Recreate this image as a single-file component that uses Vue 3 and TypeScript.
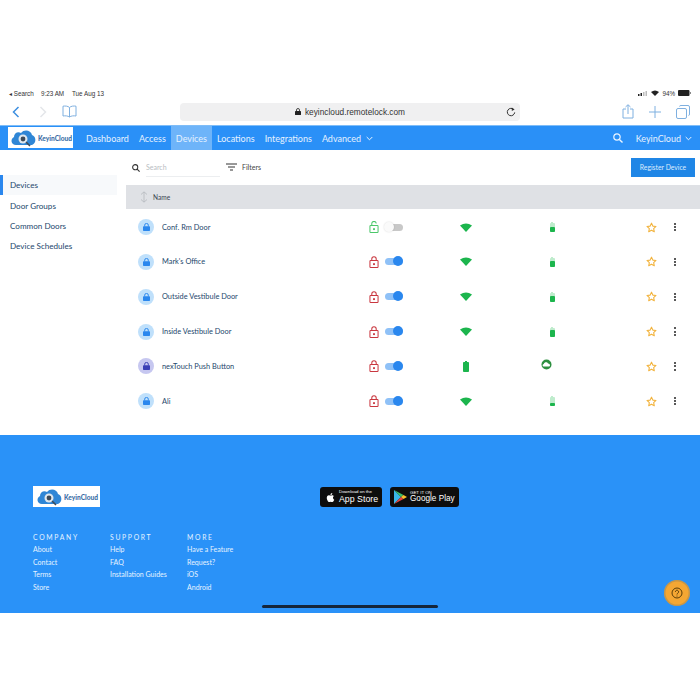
<script setup lang="ts">
interface Device {
  name: string
  locked: boolean
  on: boolean
  hub?: boolean
  level: number
}

const navLinks = ['Dashboard', 'Access', 'Devices', 'Locations', 'Integrations']
const sideLinks = ['Devices', 'Door Groups', 'Common Doors', 'Device Schedules']

const devices: Device[] = [
  { name: 'Conf. Rm Door', locked: false, on: false, level: 60 },
  { name: "Mark's Office", locked: true, on: true, level: 70 },
  { name: 'Outside Vestibule Door', locked: true, on: true, level: 60 },
  { name: 'Inside Vestibule Door', locked: true, on: true, level: 70 },
  { name: 'nexTouch Push Button', locked: true, on: true, hub: true, level: 100 },
  { name: 'Ali', locked: true, on: true, level: 35 }
]

const footerCols = [
  { title: 'COMPANY', links: ['About', 'Contact', 'Terms', 'Store'] },
  { title: 'SUPPORT', links: ['Help', 'FAQ', 'Installation Guides'] },
  { title: 'MORE', links: ['Have a Feature', 'Request?', 'iOS', 'Android'] }
]
</script>

<template>
  <div class="page">
    <div class="status-bar">
      <span class="status-left">&#9666; Search</span>
      <span class="status-time">9:23 AM</span>
      <span class="status-date">Tue Aug 13</span>
      <span class="status-right">
        <svg width="10" height="5" viewBox="0 0 10 5"><rect x="0" y="3" width="1.5" height="2" fill="#222" /><rect x="2.5" y="2" width="1.5" height="3" fill="#222" /><rect x="5" y="1" width="1.5" height="4" fill="#bbb" /><rect x="7.5" y="0" width="1.5" height="5" fill="#bbb" /></svg>
        <svg width="8" height="6" viewBox="0 0 8 6"><path d="M0 2 Q4 -1 8 2 L4 6 Z" fill="#222" /></svg>
        <span>94%</span>
        <svg width="13" height="6" viewBox="0 0 13 6"><rect x="0" y="0" width="11.5" height="6" rx="1" fill="#222" /><rect x="12" y="2" width="1" height="2" fill="#888" /></svg>
      </span>
    </div>

    <div class="safari-bar">
      <div class="safari-left">
        <svg width="8" height="12" viewBox="0 0 8 12"><path d="M6.5 1 L1.5 6 L6.5 11" fill="none" stroke="#3d8fe0" stroke-width="1.5" /></svg>
        <svg width="8" height="12" viewBox="0 0 8 12"><path d="M1.5 1 L6.5 6 L1.5 11" fill="none" stroke="#e4e6ea" stroke-width="1.5" /></svg>
        <svg class="book" width="15" height="13" viewBox="0 0 15 13"><path d="M7.5 2.5 C6 1 3 .8 1 1.2 V11 C3 10.6 6 10.8 7.5 12 C9 10.8 12 10.6 14 11 V1.2 C12 .8 9 1 7.5 2.5 Z M7.5 2.5 V12" fill="none" stroke="#7fb0e0" stroke-width="1" /></svg>
      </div>
      <div class="url-pill">
        <svg class="url-lock" width="6" height="7" viewBox="0 0 6 7"><path d="M1.5 3 V2 a1.5 1.5 0 0 1 3 0 V3" fill="none" stroke="#222" stroke-width=".8" /><rect y="3" width="6" height="4" rx=".6" fill="#222" /></svg>
        <span>keyincloud.remotelock.com</span>
        <svg class="url-reload" width="10" height="10" viewBox="0 0 10 10"><path d="M7.8 2.6 A3.7 3.7 0 1 0 8.7 5.4" fill="none" stroke="#333" stroke-width="1" /><path d="M5.8 .4 L8.6 2.4 L5.8 4 Z" fill="#333" /></svg>
      </div>
      <div class="safari-right">
        <svg width="12" height="15" viewBox="0 0 12 15"><path d="M4 5 H1 V14 H11 V5 H8 M6 10 V1 M3.5 3 L6 .7 L8.5 3" fill="none" stroke="#7fb0e0" stroke-width="1" /></svg>
        <svg width="12" height="12" viewBox="0 0 12 12"><path d="M6 0 V12 M0 6 H12" stroke="#7fb0e0" stroke-width="1" /></svg>
        <svg width="14" height="14" viewBox="0 0 14 14"><rect x=".5" y="3.5" width="10" height="10" rx="1.5" fill="none" stroke="#7fb0e0" /><path d="M3.5 1.5 Q3.5 .5 5 .5 H12 Q13.5 .5 13.5 2 V9 Q13.5 10.5 12.5 10.5" fill="none" stroke="#7fb0e0" /></svg>
      </div>
    </div>

    <nav class="nav">
      <div class="logo logo-nav">
        <svg width="27" height="18" viewBox="0 0 27 18">
          <path d="M6 16 C1 16 0 10 4 8 C4 4 8 2 11 4 C14 0 21 1 22 6 C26 7 27 14 22 16 Z" fill="#2f86d6" />
          <circle cx="13" cy="10" r="4.5" fill="#dfe7ee" />
          <circle cx="13" cy="10" r="2.4" fill="#3d4a58" />
          <path d="M16 13 L20 17" stroke="#3d4a58" stroke-width="1.6" />
        </svg>
        <span>KeyinCloud</span>
      </div>
      <a v-for="link in navLinks" :key="link" class="nav-link" :class="{ active: link === 'Devices' }">{{ link }}</a>
      <a class="nav-link">
        Advanced
        <svg class="chev" width="7" height="5" viewBox="0 0 7 5"><path d="M.7 1 L3.5 3.8 L6.3 1" fill="none" stroke="#eaf4ff" stroke-width="1" /></svg>
      </a>
      <div class="nav-right">
        <svg width="10" height="10" viewBox="0 0 10 10"><circle cx="4" cy="4" r="3.2" fill="none" stroke="#eaf4ff" stroke-width="1.2" /><path d="M6.4 6.4 L9.5 9.5" stroke="#eaf4ff" stroke-width="1.4" /></svg>
        <span class="account">KeyinCloud</span>
        <svg width="7" height="5" viewBox="0 0 7 5"><path d="M.7 1 L3.5 3.8 L6.3 1" fill="none" stroke="#eaf4ff" stroke-width="1" /></svg>
      </div>
    </nav>

    <div class="content">
      <aside class="sidebar">
        <a v-for="link in sideLinks" :key="link" class="side-link" :class="{ active: link === 'Devices' }">{{ link }}</a>
      </aside>
      <main class="main">
        <div class="toolbar">
          <svg class="tool-search" width="8" height="8" viewBox="0 0 10 10"><circle cx="4" cy="4" r="3.2" fill="none" stroke="#333" stroke-width="1.3" /><path d="M6.4 6.4 L9.5 9.5" stroke="#333" stroke-width="1.5" /></svg>
          <div class="search-box">Search</div>
          <div class="filters">
            <svg width="11" height="8" viewBox="0 0 11 8"><path d="M0 1 H11 M2 4 H9 M4 7 H7" stroke="#333" stroke-width="1" /></svg>
            <span>Filters</span>
          </div>
          <button class="register">Register Device</button>
        </div>

        <div class="table-head">
          <svg width="8" height="12" viewBox="0 0 8 12"><path d="M1 3.5 L4 .8 L7 3.5 M1 8.5 L4 11.2 L7 8.5 M4 1 V11" fill="none" stroke="#b4b8bd" stroke-width=".8" /></svg>
          <span>Name</span>
        </div>

        <div v-for="d in devices" :key="d.name" class="row">
          <span class="avatar" :class="{ hub: d.hub }">
            <svg width="7" height="8" viewBox="0 0 7 8"><path d="M1.7 3.5 V2.2 a1.8 1.8 0 0 1 3.6 0 V3.5" fill="none" stroke="currentColor" /><rect y="3.3" width="7" height="4.7" rx=".7" fill="currentColor" /></svg>
          </span>
          <span class="name">{{ d.name }}</span>
          <span class="lock-cell">
            <svg width="10" height="12" viewBox="0 0 10 13" :class="d.locked ? 'red' : 'green'">
              <path v-if="d.locked" d="M2.6 5 V3.2 a2.4 2.4 0 0 1 4.8 0 V5" fill="none" stroke="currentColor" stroke-width="1.1" />
              <path v-else d="M2.6 5 V2.8 a2.4 2.4 0 0 1 4.8 0" fill="none" stroke="currentColor" stroke-width="1.1" />
              <rect x=".6" y="5" width="8.8" height="7.4" rx=".8" fill="none" stroke="currentColor" stroke-width="1.1" />
              <rect x="4" y="7.8" width="2" height="2" fill="currentColor" />
            </svg>
            <span class="toggle" :class="{ on: d.on }"><i></i></span>
          </span>
          <span class="cell">
            <svg v-if="!d.hub" width="12" height="9" viewBox="0 0 12 9"><path d="M0 2.6 Q6 -1.6 12 2.6 L6 9 Z" fill="#1cb54d" /></svg>
            <span v-else class="battery wide"><i style="height: 100%"></i></span>
          </span>
          <span class="cell">
            <svg v-if="d.hub" class="hub-cloud" width="11" height="11" viewBox="0 0 11 11"><circle cx="5.5" cy="5.5" r="5" fill="#2c8f3f" /><path d="M2.8 7.6 C1.2 7.6 1.2 5.2 2.8 5 C3.1 2.9 6.4 2.6 7 4.5 C9.2 4.3 9.8 7.6 7.8 7.6 Z" fill="#fff" /></svg>
            <span v-else class="battery"><i :style="{ height: d.level + '%' }"></i></span>
          </span>
          <span></span>
          <span class="cell">
            <svg width="11" height="11" viewBox="0 0 24 24"><path d="M12 2.5 L14.9 8.9 L21.8 9.7 L16.7 14.4 L18.1 21.3 L12 17.8 L5.9 21.3 L7.3 14.4 L2.2 9.7 L9.1 8.9 Z" fill="none" stroke="#f2b33d" stroke-width="2.4" stroke-linejoin="round" /></svg>
          </span>
          <span class="cell dots"><i></i><i></i><i></i></span>
        </div>
      </main>
    </div>

    <footer class="footer">
      <div class="footer-top">
        <div class="logo logo-footer">
          <svg width="27" height="18" viewBox="0 0 27 18">
            <path d="M6 16 C1 16 0 10 4 8 C4 4 8 2 11 4 C14 0 21 1 22 6 C26 7 27 14 22 16 Z" fill="#2f86d6" />
            <circle cx="13" cy="10" r="4.5" fill="#dfe7ee" />
            <circle cx="13" cy="10" r="2.4" fill="#3d4a58" />
            <path d="M16 13 L20 17" stroke="#3d4a58" stroke-width="1.6" />
          </svg>
          <span>KeyinCloud</span>
        </div>
        <div class="badges">
          <div class="badge badge-apple">
            <svg width="11" height="13" viewBox="0 0 24 24"><path fill="#fff" d="M18.71 19.5c-.83 1.24-1.71 2.45-3.05 2.47-1.34.03-1.77-.79-3.29-.79-1.53 0-2 .77-3.27.82-1.31.05-2.3-1.32-3.14-2.53C4.25 17 2.94 12.45 4.7 9.39c.87-1.52 2.43-2.48 4.12-2.51 1.28-.02 2.5.87 3.29.87.78 0 2.26-1.07 3.81-.91.65.03 2.47.26 3.64 1.98-.09.06-2.17 1.28-2.15 3.81.03 3.02 2.65 4.03 2.68 4.04-.03.07-.42 1.44-1.38 2.83M13 3.5c.73-.83 1.94-1.46 2.94-1.5.13 1.17-.34 2.35-1.04 3.19-.69.85-1.83 1.51-2.95 1.42-.15-1.15.41-2.35 1.05-3.11z" /></svg>
            <div class="badge-text"><small>Download on the</small><b>App Store</b></div>
          </div>
          <div class="badge badge-google">
            <svg width="13" height="14" viewBox="0 0 13 14">
              <path d="M0 0 L7 7 L0 14 Z" fill="#38b6e8" />
              <path d="M0 0 L9.5 5 L7 7 Z" fill="#3dbd6b" />
              <path d="M0 14 L9.5 9 L7 7 Z" fill="#e8413f" />
              <path d="M9.5 5 L13 7 L9.5 9 L7 7 Z" fill="#fbc02d" />
            </svg>
            <div class="badge-text"><small>GET IT ON</small><b>Google Play</b></div>
          </div>
        </div>
      </div>
      <div class="footer-cols">
        <div v-for="col in footerCols" :key="col.title" class="footer-col">
          <h4>{{ col.title }}</h4>
          <a v-for="link in col.links" :key="link">{{ link }}</a>
        </div>
      </div>
      <div class="home-indicator"></div>
      <div class="help">
        <svg width="12" height="12" viewBox="0 0 12 12"><circle cx="6" cy="6" r="5" fill="none" stroke="#5b3d08" stroke-width="1" /><path d="M4.4 4.8 a1.6 1.6 0 1 1 2.4 1.4 C6.2 6.6 6 6.9 6 7.5" fill="none" stroke="#5b3d08" stroke-width="1" /><circle cx="6" cy="9" r=".6" fill="#5b3d08" /></svg>
      </div>
    </footer>
  </div>
</template>

<style>
html,
body {
  margin: 0;
  background: #fff;
}
</style>

<style scoped>
.page {
  height: 700px;
  overflow: hidden;
  padding-top: 88px;
  box-sizing: border-box;
  font-family: Lato, "Open Sans", sans-serif;
  color: #24476c;
}
.status-bar {
  height: 10px;
  display: flex;
  align-items: center;
  padding: 0 9px;
  font-family: "Liberation Sans", sans-serif;
  font-size: 6.3px;
  color: #333;
}
.status-left {
  width: 32px;
}
.status-time {
  width: 31px;
}
.status-right {
  margin-left: auto;
  display: flex;
  align-items: center;
  gap: 3px;
}
.safari-bar {
  height: 27px;
  display: flex;
  align-items: center;
  padding: 0 10px;
}
.safari-left {
  width: 170px;
  display: flex;
  align-items: center;
  gap: 19px;
  padding-left: 2px;
  box-sizing: border-box;
}
.book {
  margin-left: -4px;
}
.url-pill {
  position: relative;
  width: 340px;
  height: 18px;
  border-radius: 4px;
  background: #f0f0f1;
  display: flex;
  align-items: center;
  justify-content: center;
  gap: 4px;
  font-family: "Liberation Sans", sans-serif;
  font-size: 8.3px;
  color: #333;
}
.url-reload {
  position: absolute;
  right: 4px;
  top: 4px;
}
.safari-right {
  margin-left: auto;
  display: flex;
  align-items: center;
  gap: 15px;
}
.nav {
  height: 25px;
  background: #2a90f7;
  border-top: 1px solid #7fbdf8;
  box-sizing: border-box;
  display: flex;
  align-items: stretch;
  padding-left: 8px;
  font-size: 9px;
  color: #e6f2ff;
}
.logo {
  background: #fff;
  display: flex;
  align-items: center;
  gap: 1px;
  box-sizing: border-box;
  font-weight: 900;
  font-size: 6.6px;
  color: #3b6ea6;
  white-space: nowrap;
}
.logo-nav {
  width: 65px;
  height: 21px;
  margin: 1px 8px 0 0;
  padding-left: 2px;
}
.nav-link {
  display: flex;
  align-items: center;
  gap: 5px;
  padding: 0 5px;
  white-space: nowrap;
}
.nav-link.active {
  background: #6eb4f9;
}
.nav-right {
  margin-left: auto;
  display: flex;
  align-items: center;
  padding-right: 8px;
}
.account {
  margin: 0 4px 0 13px;
}
.content {
  height: 285px;
  display: flex;
}
.sidebar {
  width: 117px;
  padding-top: 25px;
  margin-right: 9px;
  display: flex;
  flex-direction: column;
  flex-shrink: 0;
}
.side-link {
  height: 20.4px;
  display: flex;
  align-items: center;
  padding-left: 10px;
  font-size: 8.1px;
}
.side-link.active {
  background: #f7f9fb;
  box-shadow: inset 3px 0 0 #2a87ee;
}
.main {
  flex: 1;
  min-width: 0;
}
.toolbar {
  height: 35px;
  display: flex;
  align-items: center;
  padding-left: 6px;
  padding-right: 5px;
  font-size: 7px;
}
.search-box {
  width: 74px;
  margin: 4px 0 0 6px;
  padding-bottom: 4px;
  border-bottom: 1px solid #eceef0;
  color: #b9bdc2;
  line-height: 9px;
}
.filters {
  margin: -1px 0 0 6px;
  display: flex;
  align-items: center;
  gap: 5px;
  color: #444;
}
.register {
  margin-left: auto;
  width: 64px;
  height: 19px;
  margin-top: -1px;
  padding: 0;
  border: 0;
  background: #1f86e6;
  color: #dcecff;
  font: inherit;
  font-size: 6.8px;
}
.table-head {
  height: 24px;
  margin-bottom: 0.8px;
  background: #dfe1e5;
  display: flex;
  align-items: center;
  gap: 5px;
  padding-left: 14px;
  font-size: 6.6px;
  color: #3a4550;
}
.row {
  height: 34.8px;
  display: grid;
  grid-template-columns: 24px 206px 36px 124px 48px 1fr 24px 24px;
  align-items: center;
  padding: 0 13px 0 12px;
}
.avatar {
  width: 16px;
  height: 16px;
  border-radius: 50%;
  background: #bfe0fb;
  color: #2a87ee;
  display: flex;
  align-items: center;
  justify-content: center;
}
.avatar.hub {
  background: #c6c7f0;
  color: #3b3fb5;
}
.name {
  font-size: 7.4px;
}
.lock-cell {
  display: flex;
  align-items: center;
  gap: 6px;
  padding-left: 1px;
}
.lock-cell svg {
  flex-shrink: 0;
}
.red {
  color: #c9373f;
}
.green {
  color: #4cc76a;
}
.toggle {
  position: relative;
  flex-shrink: 0;
  width: 18px;
  height: 7px;
  border-radius: 4px;
  background: #c8c8c8;
}
.toggle i {
  position: absolute;
  top: -2px;
  left: -1px;
  width: 10px;
  height: 10px;
  border-radius: 50%;
  background: #fafafa;
  box-shadow: 0 0 2px rgba(0, 0, 0, 0.15);
}
.toggle.on {
  background: #8fc1f7;
}
.toggle.on i {
  left: 8px;
  background: #2a87ee;
  box-shadow: none;
}
.cell {
  display: flex;
  align-items: center;
  justify-content: center;
}
.battery {
  position: relative;
  width: 5px;
  height: 9px;
  margin-top: 1px;
  border-radius: 1px;
  background: #bfeccd;
  display: flex;
  align-items: flex-end;
}
.battery::before {
  content: "";
  position: absolute;
  left: 1.5px;
  top: -1px;
  width: 2px;
  height: 1px;
  background: #bfeccd;
}
.battery.wide {
  width: 6px;
  height: 10px;
}
.battery.wide::before {
  left: 2px;
  background: #1cb54d;
}
.battery i {
  display: block;
  width: 100%;
  border-radius: 1px;
  background: #1cb54d;
}
.hub-cloud {
  margin: -4px 12px 0 0;
}
.dots {
  flex-direction: column;
  gap: 1.2px;
}
.dots i {
  width: 2px;
  height: 2px;
  border-radius: 50%;
  background: #222;
}
.footer {
  position: relative;
  height: 178px;
  background: #2a92f8;
  box-sizing: border-box;
  padding: 51px 0 0 33px;
  color: #e6f2ff;
}
.footer-top {
  display: flex;
  align-items: flex-start;
}
.logo-footer {
  width: 67px;
  height: 21px;
  margin-right: 220px;
  padding-left: 3px;
}
.badges {
  display: flex;
  gap: 8px;
  margin-top: 1px;
}
.badge {
  height: 20px;
  border-radius: 3px;
  background: #0d0d0d;
  display: flex;
  align-items: center;
  gap: 3px;
  box-sizing: border-box;
  padding-left: 5px;
  color: #fff;
}
.badge-apple {
  width: 62px;
}
.badge-google {
  width: 69px;
  gap: 3px;
  padding-left: 4px;
}
.badge-text {
  display: flex;
  flex-direction: column;
  font-family: "Liberation Sans", sans-serif;
  line-height: 1;
  white-space: nowrap;
}
.badge-text small {
  font-size: 4.4px;
}
.badge-text b {
  font-weight: 400;
  font-size: 8.8px;
}
.badge-google .badge-text b {
  font-size: 8.2px;
}
.footer-cols {
  display: flex;
  margin-top: 24px;
}
.footer-col {
  width: 77px;
  display: flex;
  flex-direction: column;
  font-size: 7px;
  line-height: 12.4px;
}
.footer-col h4 {
  margin: 0;
  font-weight: 400;
  font-size: 6.8px;
  letter-spacing: 1.7px;
}
.home-indicator {
  position: absolute;
  left: 262px;
  bottom: 5px;
  width: 176px;
  height: 3px;
  border-radius: 2px;
  background: #15253a;
}
.help {
  position: absolute;
  left: 664px;
  top: 145px;
  width: 26px;
  height: 26px;
  border-radius: 50%;
  background: #f5a733;
  box-shadow: inset 0 0 0 1.5px rgba(150, 130, 90, 0.45);
  display: flex;
  align-items: center;
  justify-content: center;
}
</style>
